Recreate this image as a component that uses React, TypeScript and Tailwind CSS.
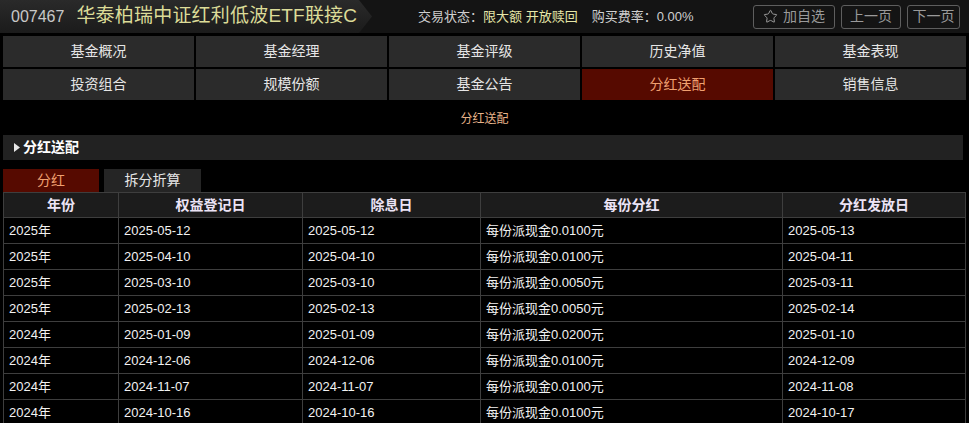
import { Star } from 'lucide-react';

const navRows = [
  ['基金概况', '基金经理', '基金评级', '历史净值', '基金表现'],
  ['投资组合', '规模份额', '基金公告', '分红送配', '销售信息'],
];

const columns = [
  { label: '年份', w: 'w-[115px]' },
  { label: '权益登记日', w: 'w-[184px]' },
  { label: '除息日', w: 'w-[178px]' },
  { label: '每份分红', w: 'w-[302px]' },
  { label: '分红发放日', w: 'flex-1' },
];

const rows = [
  ['2025年', '2025-05-12', '2025-05-12', '每份派现金0.0100元', '2025-05-13'],
  ['2025年', '2025-04-10', '2025-04-10', '每份派现金0.0100元', '2025-04-11'],
  ['2025年', '2025-03-10', '2025-03-10', '每份派现金0.0050元', '2025-03-11'],
  ['2025年', '2025-02-13', '2025-02-13', '每份派现金0.0050元', '2025-02-14'],
  ['2024年', '2025-01-09', '2025-01-09', '每份派现金0.0200元', '2025-01-10'],
  ['2024年', '2024-12-06', '2024-12-06', '每份派现金0.0100元', '2024-12-09'],
  ['2024年', '2024-11-07', '2024-11-07', '每份派现金0.0100元', '2024-11-08'],
  ['2024年', '2024-10-16', '2024-10-16', '每份派现金0.0100元', '2024-10-17'],
];

const font = "font-['Liberation_Sans','Noto_Sans_CJK_SC',sans-serif]";

export default function App() {
  return (
    <div className={`w-[969px] h-[423px] overflow-hidden bg-black ${font}`}>
      {/* Top header */}
      <div className="h-[33px] flex items-stretch bg-[#141414]">
        <div className="w-[372px] flex items-center bg-gradient-to-b from-[#2a2a2a] to-[#1b1b1b] [clip-path:polygon(0_0,calc(100%-13px)_0,100%_50%,calc(100%-13px)_100%,0_100%)]">
          <span className="ml-[11px] text-[16px] text-[#c8c8c8]">007467</span>
          <span className="ml-[12px] text-[19px] text-[#dcdc98] tracking-[0.2px]">华泰柏瑞中证红利低波ETF联接C</span>
        </div>
        <div className="ml-[46px] flex items-center text-[13px]">
          <span className="text-[#cfcfcf]">交易状态：</span>
          <span className="text-[#e6e6a8]">限大额 开放赎回</span>
          <span className="ml-[14px] text-[#cfcfcf]">购买费率：0.00%</span>
        </div>
        <div className="ml-auto mr-[9px] flex items-center gap-[6px] text-[14px] text-[#9a9a9a]">
          <div className="h-[24px] w-[82px] flex items-center justify-center gap-[5px] border border-[#5e5e5e] rounded-[3px]">
            <Star size={15} strokeWidth={1.6} />
            <span>加自选</span>
          </div>
          <div className="h-[24px] w-[60px] flex items-center justify-center border border-[#5e5e5e] rounded-[3px]">上一页</div>
          <div className="h-[24px] w-[53px] flex items-center justify-center border border-[#5e5e5e] rounded-[3px]">下一页</div>
        </div>
      </div>

      {/* Nav grid */}
      <div className="mt-[3px] px-[3px] flex flex-col gap-[2px]">
        {navRows.map((r, i) => (
          <div key={i} className="flex gap-[2px]">
            {r.map((t) => {
              const active = t === '分红送配';
              return (
                <div
                  key={t}
                  className={`flex-1 h-[31px] flex items-center justify-center text-[14px] ${
                    active ? 'bg-[#560a00] text-[#f0a070]' : 'bg-[#2b2b2b] text-[#e6e6e6]'
                  }`}
                >
                  {t}
                </div>
              );
            })}
          </div>
        ))}
      </div>

      <div className="h-[35px] pt-[2px] flex items-center justify-center text-[12px] text-[#e8b48a]">分红送配</div>

      {/* Section bar */}
      <div className="mx-[3px] mr-[6px] h-[25px] flex items-center bg-[#222222]">
        <svg width="6" height="9" viewBox="0 0 6 9" className="ml-[11px]">
          <path d="M0 0 L6 4.5 L0 9 Z" fill="#e8e8e8" />
        </svg>
        <span className="ml-[3px] text-[14px] font-bold text-white">分红送配</span>
      </div>

      {/* Tabs */}
      <div className="mt-[9px] ml-[3px] flex gap-[5px] h-[23px]">
        <div className="w-[96px] flex items-center justify-center bg-[#560a00] text-[14px] text-[#f0a070]">分红</div>
        <div className="w-[97px] flex items-center justify-center bg-[#252525] text-[14px] text-[#e6e6e6]">拆分折算</div>
      </div>

      {/* Table */}
      <div className="mx-[3px] border-l border-r border-[#3e3e3e]">
        <div className="flex h-[25px] bg-[#1c1c1c] border-t border-[#3e3e3e]">
          {columns.map((c, i) => (
            <div
              key={c.label}
              className={`${c.w} flex items-center justify-center text-[14px] font-bold text-[#ece4f6] ${
                i < columns.length - 1 ? 'border-r border-[#3e3e3e]' : ''
              }`}
            >
              {c.label}
            </div>
          ))}
        </div>
        {rows.map((r, ri) => (
          <div key={ri} className="flex h-[26px] border-t border-[#3e3e3e]">
            {r.map((v, i) => (
              <div
                key={i}
                className={`${columns[i].w} flex items-center pl-[5px] text-[13px] text-[#f2f2f2] ${
                  i < columns.length - 1 ? 'border-r border-[#3e3e3e]' : ''
                }`}
              >
                {v}
              </div>
            ))}
          </div>
        ))}
      </div>
    </div>
  );
}
